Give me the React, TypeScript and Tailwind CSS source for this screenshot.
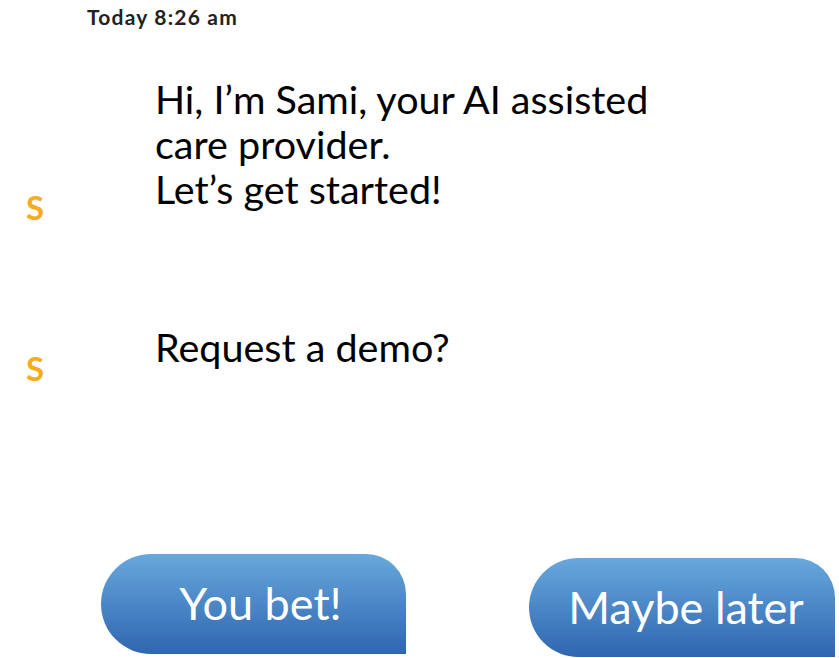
const font = { fontFamily: 'Lato, "Noto Sans", sans-serif' };

function Message({ text, sTop }: { text: string[]; sTop: number }) {
  return (
    <div className="flex">
      <div className="w-[155px] pl-[26px] shrink-0">
        <div className="text-[33px] font-bold text-[#f7ac1b] leading-none" style={{ marginTop: sTop }}>
          S
        </div>
      </div>
      <div className="text-[39.5px] leading-[45px] text-black">
        {text.map((line) => (
          <div key={line}>{line}</div>
        ))}
      </div>
    </div>
  );
}

export default function App() {
  return (
    <div className="w-[839px] h-[658px] bg-white flex flex-col overflow-hidden" style={font}>
      <div className="pl-[87px] pt-[4px] text-[21px] font-bold tracking-[1.2px] text-[#222] leading-[26px]">Today 8:26 am</div>

      <div className="mt-[46px]">
        <Message text={['Hi, I’m Sami, your AI assisted', 'care provider.', 'Let’s get started!']} sTop={115} />
      </div>

      <div className="mt-[100px]">
        <Message text={['Request a demo?']} sTop={28} />
      </div>

      <div className="mt-auto flex items-start pb-[1px]">
        <button className="ml-[101px] w-[305px] h-[100px] rounded-l-[50px] rounded-tr-[40px] bg-gradient-to-b from-[#68a8dc] to-[#2f66b0] text-white text-[45px] pl-[14px]">
          You bet!
        </button>
        <button className="ml-[123px] mt-[4px] w-[306px] h-[99px] rounded-l-[50px] rounded-tr-[40px] bg-gradient-to-b from-[#68a8dc] to-[#2f66b0] text-white text-[45px] pl-[8px]">
          Maybe later
        </button>
      </div>
    </div>
  );
}
